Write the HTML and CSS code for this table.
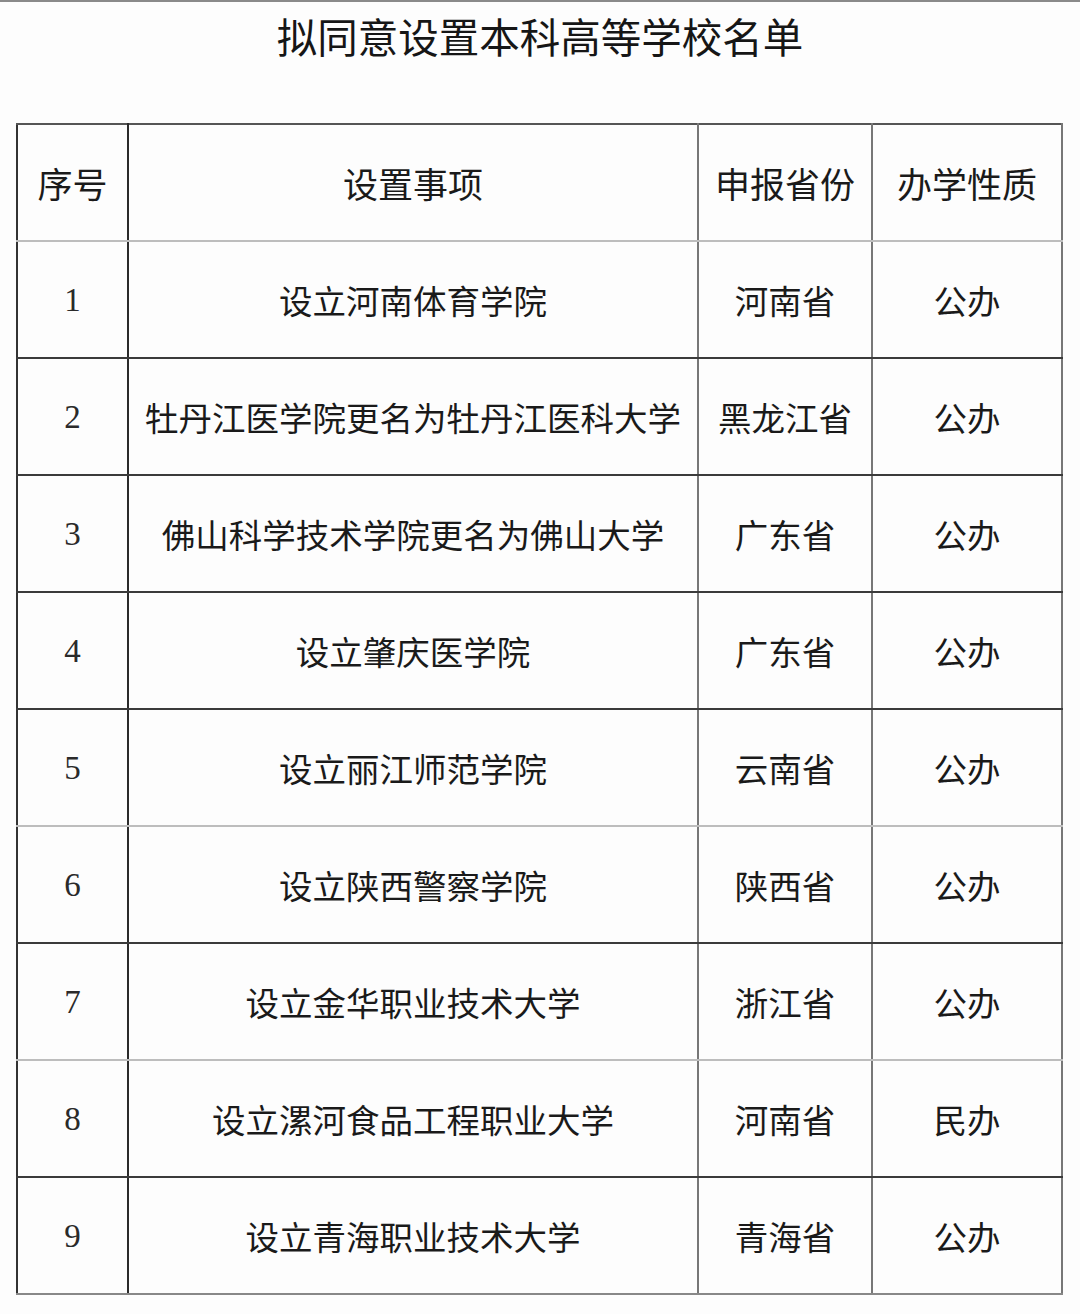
FILE: index.html
```html
<!DOCTYPE html>
<html lang="zh">
<head>
<meta charset="utf-8">
<link rel="stylesheet" href="styles.css">
</head>
<body>
<div class="page">
  <h1 class="title">拟同意设置本科高等学校名单</h1>
  <table class="list">
    <colgroup>
      <col class="c-no"><col class="c-item"><col class="c-prov"><col class="c-type">
    </colgroup>
    <thead>
      <tr class="light"><th>序号</th><th>设置事项</th><th>申报省份</th><th>办学性质</th></tr>
    </thead>
    <tbody>
      <tr><td class="num">1</td><td>设立河南体育学院</td><td>河南省</td><td>公办</td></tr>
      <tr><td class="num">2</td><td>牡丹江医学院更名为牡丹江医科大学</td><td>黑龙江省</td><td>公办</td></tr>
      <tr><td class="num">3</td><td>佛山科学技术学院更名为佛山大学</td><td>广东省</td><td>公办</td></tr>
      <tr><td class="num">4</td><td>设立肇庆医学院</td><td>广东省</td><td>公办</td></tr>
      <tr class="light"><td class="num">5</td><td>设立丽江师范学院</td><td>云南省</td><td>公办</td></tr>
      <tr><td class="num">6</td><td>设立陕西警察学院</td><td>陕西省</td><td>公办</td></tr>
      <tr class="light"><td class="num">7</td><td>设立金华职业技术大学</td><td>浙江省</td><td>公办</td></tr>
      <tr><td class="num">8</td><td>设立漯河食品工程职业大学</td><td>河南省</td><td>民办</td></tr>
      <tr class="last"><td class="num">9</td><td>设立青海职业技术大学</td><td>青海省</td><td>公办</td></tr>
    </tbody>
  </table>
</div>
</body>
</html>
```

FILE: styles.css
```css
html, body {
  margin: 0;
  padding: 0;
  background: #fdfdfd;
}
.page {
  width: 1080px;
  height: 1314px;
  border-top: 2px solid #8a8a8a;
  box-sizing: border-box;
  font-family: "Noto Sans CJK SC", "Noto Sans", sans-serif;
  color: #1a1a1a;
}
.title {
  margin: 0;
  padding-top: 10px;
  height: 70px;
  font-size: 40.5px;
  font-weight: 400;
  line-height: 48px;
  text-align: center;
  color: #161616;
}
.list {
  margin: 41px 0 0 16px;
  border-collapse: collapse;
  table-layout: fixed;
  width: 1046px;
  border-top: 2px solid #555;
  border-left: 2px solid #333;
}
.c-no { width: 111px; }
.c-item { width: 570px; }
.c-prov { width: 174px; }
.c-type { width: 190px; }
.list th, .list td {
  height: 115px;
  padding: 0;
  text-align: center;
  vertical-align: middle;
  font-size: 33.5px;
  font-weight: 400;
  line-height: 40px;
  border-bottom: 2px solid #3a3a3a;
  border-right: 2px solid #777;
  white-space: nowrap;
}
.list th:first-child, .list td:first-child {
  border-right-color: #2a2a2a;
}
.list th {
  font-size: 35px;
}
.list tr.light th, .list tr.light td {
  border-bottom-color: #bdbdbd;
}
.list tr.last td {
  border-bottom-color: #888;
}
.list td.num {
  font-family: "Liberation Serif", "Times New Roman", serif;
  font-size: 33px;
  color: #2a2a2a;
}
```
